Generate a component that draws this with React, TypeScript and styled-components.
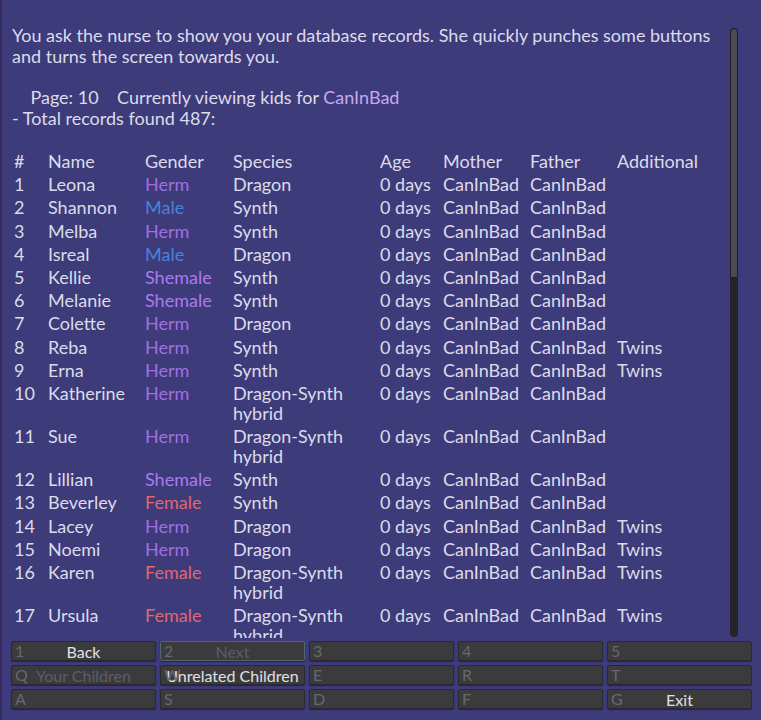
import React from 'react';
import styled, { createGlobalStyle } from 'styled-components';

const GlobalStyle = createGlobalStyle`
  html, body {
    margin: 0;
    padding: 0;
    background: #3d3b7a;
  }
  body {
    font-family: Lato, "Noto Sans", sans-serif;
  }
`;

const Screen = styled.div`
  width: 761px;
  height: 720px;
  display: flex;
  flex-direction: column;
  background: #3d3b7a;
  border-left: 2px solid #35295f;
  box-sizing: border-box;
  overflow: hidden;
`;

const Body = styled.div`
  display: flex;
  flex-direction: row;
  height: 613px;
  padding: 25px 0 0 10px;
  box-sizing: content-box;
`;

const TextArea = styled.div`
  flex: 1;
  overflow: hidden;
  color: #dcdbea;
  font-size: 18px;
  line-height: 21px;
`;

const Para = styled.p`
  margin: 0;
`;

const Gap = styled.div<{ $h: number }>`
  height: ${(p) => p.$h}px;
`;

const Highlight = styled.span`
  color: #c6a8f2;
`;

const Table = styled.div`
  display: grid;
  grid-template-columns: 34px 97px 88px 147px 63px 87px 87px 1fr;
  padding-left: 2px;
  line-height: 20px;
`;

const Cell = styled.div<{ $color?: string }>`
  color: ${(p) => p.$color || '#dcdbea'};
  padding-bottom: 3.2px;
  padding-right: 6px;
  white-space: normal;
`;

const ScrollBar = styled.div`
  width: 8px;
  margin: 3px 23px 1px 8px;
  background: #242428;
  border-radius: 4px;
  display: flex;
  flex-direction: column;
  overflow: hidden;
`;

const Thumb = styled.div`
  height: 250px;
  background: #4c4b55;
  border: 1px solid #1e1e22;
  border-radius: 4px 4px 0 0;
  box-sizing: border-box;
`;

const Buttons = styled.div`
  display: grid;
  grid-template-columns: repeat(5, 145px);
  grid-auto-rows: 20px;
  gap: 4px;
  padding: 3px 0 0 9px;
`;

const KeyButton = styled.div<{ $enabled?: boolean; $focused?: boolean }>`
  position: relative;
  background: #3b3b3e;
  border: 1px solid ${(p) => (p.$focused ? '#52666f' : '#2a2a2e')};
  border-radius: 2px;
  box-sizing: border-box;
  box-shadow: 0 1px 1px rgba(20, 18, 50, 0.6);
  display: flex;
  align-items: center;
  justify-content: center;
  font-size: 16px;
  color: ${(p) => (p.$enabled ? '#e0e0e4' : '#5d5d62')};
  white-space: nowrap;
`;

const HotKey = styled.span`
  position: absolute;
  left: 3px;
  top: 0;
  line-height: 18px;
  color: #68686d;
`;

const COLORS: Record<string, string> = {
  Herm: '#a070e2',
  Male: '#4a82da',
  Shemale: '#ad7af0',
  Female: '#e06870',
};

type Kid = [string, string, string, string];

const kids: Kid[] = [
  ['Leona', 'Herm', 'Dragon', ''],
  ['Shannon', 'Male', 'Synth', ''],
  ['Melba', 'Herm', 'Synth', ''],
  ['Isreal', 'Male', 'Dragon', ''],
  ['Kellie', 'Shemale', 'Synth', ''],
  ['Melanie', 'Shemale', 'Synth', ''],
  ['Colette', 'Herm', 'Dragon', ''],
  ['Reba', 'Herm', 'Synth', 'Twins'],
  ['Erna', 'Herm', 'Synth', 'Twins'],
  ['Katherine', 'Herm', 'Dragon-Synth hybrid', ''],
  ['Sue', 'Herm', 'Dragon-Synth hybrid', ''],
  ['Lillian', 'Shemale', 'Synth', ''],
  ['Beverley', 'Female', 'Synth', ''],
  ['Lacey', 'Herm', 'Dragon', 'Twins'],
  ['Noemi', 'Herm', 'Dragon', 'Twins'],
  ['Karen', 'Female', 'Dragon-Synth hybrid', 'Twins'],
  ['Ursula', 'Female', 'Dragon-Synth hybrid', 'Twins'],
  ['Delia', 'Herm', 'Synth', ''],
  ['Marcy', 'Male', 'Dragon', ''],
  ['Tessa', 'Female', 'Synth', ''],
];

const headers = ['#', 'Name', 'Gender', 'Species', 'Age', 'Mother', 'Father', 'Additional'];

const buttons: { key: string; label?: string; enabled?: boolean; focused?: boolean }[] = [
  { key: '1', label: 'Back', enabled: true },
  { key: '2', label: 'Next', focused: true },
  { key: '3' },
  { key: '4' },
  { key: '5' },
  { key: 'Q', label: 'Your Children' },
  { key: 'W', label: 'Unrelated Children', enabled: true },
  { key: 'E' },
  { key: 'R' },
  { key: 'T' },
  { key: 'A' },
  { key: 'S' },
  { key: 'D' },
  { key: 'F' },
  { key: 'G', label: 'Exit', enabled: true },
];

export default function App() {
  return (
    <>
      <GlobalStyle />
      <Screen>
        <Body>
          <TextArea>
            <Para>
              You ask the nurse to show you your database records. She quickly punches some buttons and turns the screen towards you.
            </Para>
            <Gap $h={20} />
            <Para>
              &nbsp;&nbsp;&nbsp;&nbsp;Page: 10&nbsp;&nbsp;&nbsp;&nbsp;Currently viewing kids for <Highlight>CanInBad</Highlight>
            </Para>
            <Para>- Total records found 487:</Para>
            <Gap $h={22} />
            <Table>
              {headers.map((h) => (
                <Cell key={h}>{h}</Cell>
              ))}
              {kids.map(([name, gender, species, extra], i) => (
                <React.Fragment key={name}>
                  <Cell>{i + 1}</Cell>
                  <Cell>{name}</Cell>
                  <Cell $color={COLORS[gender]}>{gender}</Cell>
                  <Cell>{species}</Cell>
                  <Cell>0 days</Cell>
                  <Cell>CanInBad</Cell>
                  <Cell>CanInBad</Cell>
                  <Cell>{extra}</Cell>
                </React.Fragment>
              ))}
            </Table>
          </TextArea>
          <ScrollBar>
            <Thumb />
          </ScrollBar>
        </Body>
        <Buttons>
          {buttons.map((b) => (
            <KeyButton key={b.key} $enabled={b.enabled} $focused={b.focused}>
              <HotKey>{b.key}</HotKey>
              {b.label}
            </KeyButton>
          ))}
        </Buttons>
      </Screen>
    </>
  );
}
